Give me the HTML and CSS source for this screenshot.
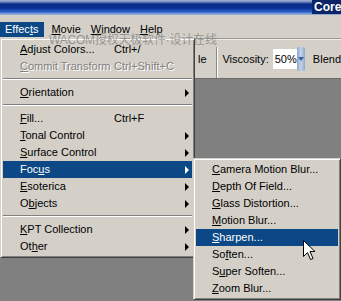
FILE: index.html
```html
<!DOCTYPE html>
<html lang="en">
<head>
    <meta charset="UTF-8">
    <title>Corel Painter - Effects</title>
    <link rel="stylesheet" href="styles.css">
</head>
<body>
    <div class="app">
        <div class="titlebar"><span class="title">Core</span></div>

        <div class="menubar">
            <div class="menu-title open">Effec<u>t</u>s</div>
            <div class="menu-title"><u>M</u>ovie</div>
            <div class="menu-title"><u>W</u>indow</div>
            <div class="menu-title"><u>H</u>elp</div>
        </div>

        <div class="toolbar">
            <span class="tool-label">le</span>
            <span class="tool-sep"></span>
            <span class="tool-label">Viscosity:</span>
            <span class="tool-input">50%</span>
            <span class="spinner"><span class="chevron"></span></span>
            <span class="tool-label blend">Blend</span>
        </div>

        <div class="workspace"></div>

        <div class="watermark">WACOM授权天极软件·设计在线</div>

        <div class="menu main-menu">
            <div class="item"><span class="label"><u>A</u>djust Colors...</span><span class="key">Ctrl+/</span></div>
            <div class="item disabled"><span class="label"><u>C</u>ommit Transform</span><span class="key">Ctrl+Shift+C</span></div>
            <div class="sep"></div>
            <div class="item sub"><span class="label"><u>O</u>rientation</span><span class="arrow"></span></div>
            <div class="sep"></div>
            <div class="item"><span class="label"><u>F</u>ill...</span><span class="key">Ctrl+F</span></div>
            <div class="item sub"><span class="label"><u>T</u>onal Control</span><span class="arrow"></span></div>
            <div class="item sub"><span class="label"><u>S</u>urface Control</span><span class="arrow"></span></div>
            <div class="item sub active"><span class="label">Foc<u>u</u>s</span><span class="arrow"></span></div>
            <div class="item sub"><span class="label"><u>E</u>soterica</span><span class="arrow"></span></div>
            <div class="item sub"><span class="label">O<u>b</u>jects</span><span class="arrow"></span></div>
            <div class="sep"></div>
            <div class="item sub"><span class="label"><u>K</u>PT Collection</span><span class="arrow"></span></div>
            <div class="item sub"><span class="label">Ot<u>h</u>er</span><span class="arrow"></span></div>
        </div>

        <div class="menu sub-menu">
            <div class="item"><span class="label"><u>C</u>amera Motion Blur...</span></div>
            <div class="item"><span class="label"><u>D</u>epth Of Field...</span></div>
            <div class="item"><span class="label"><u>G</u>lass Distortion...</span></div>
            <div class="item"><span class="label"><u>M</u>otion Blur...</span></div>
            <div class="item active"><span class="label"><u>S</u>harpen...</span></div>
            <div class="item"><span class="label">So<u>f</u>ten...</span></div>
            <div class="item"><span class="label">S<u>u</u>per Soften...</span></div>
            <div class="item"><span class="label"><u>Z</u>oom Blur...</span></div>
        </div>

        <svg class="cursor" width="13" height="21" viewBox="0 0 13 21">
            <path d="M0.5 0.5 L0.5 16.5 L4.5 12.5 L7.5 19.5 L10 18.5 L7 11.5 L12 11.5 Z" fill="#fff" stroke="#000" stroke-width="1"/>
        </svg>
    </div>
</body>
</html>
```

FILE: styles.css
```css
:root {
    --face: #d4d0c8;
    --shadow: #808080;
    --dark: #404040;
    --select: #0c4886;
}

body { margin: 0; background: #808080; font-family: 'Liberation Sans', Arial, sans-serif; font-size: 11px; color: #000; }
u { text-decoration: underline; text-underline-offset: 1px; }

.app { position: relative; width: 341px; height: 301px; overflow: hidden; background: #808080; }

.titlebar { height: 15px; background: linear-gradient(#a9b9d6 0, #6c86bb 2px, #0b2a86 4px, #0a2f92 8px, #2c64cc 12px, #8fa9d8 14px); display: flex; justify-content: flex-end; }
.title { color: #fff; font-weight: bold; font-size: 12px; line-height: 13px; padding: 1px 0 0 2px; background: #0b2466; height: 13px; width: 27px; }

.menubar { height: 23px; background: var(--face); display: flex; align-items: flex-end; box-sizing: border-box; padding-bottom: 1px; }
.menu-title { height: 15px; line-height: 15px; padding: 0 5px 0 5px; }
.menu-title.open { background: var(--select); color: #fff; padding-right: 6px; }
.menu-title.open + .menu-title { padding-left: 7px; }

.toolbar { height: 41px; background: var(--face); border-top: 1px solid #9a9890; border-bottom: 1px solid #6e6c68; box-sizing: border-box; display: flex; align-items: center; padding-left: 198px; box-shadow: inset 0 1px #eeece8; }
.tool-label { line-height: 14px; }
.tool-sep { width: 1px; height: 31px; margin: 8px 6px 0 9px; background: #8a8780; box-shadow: 1px 0 #fff; align-self: flex-start; }
.tool-input { background: #fff; width: 26px; height: 20px; line-height: 20px; margin-left: 4px; padding-left: 2px; box-sizing: border-box; }
.spinner { width: 9px; height: 24px; background: linear-gradient(90deg, #8ea7c8, #c5d5ec 50%, #8ea7c8); border-radius: 2px; display: flex; align-items: center; justify-content: center; }
.chevron { width: 0; height: 0; border-left: 3px solid transparent; border-right: 3px solid transparent; border-top: 4px solid #3c5f96; }
.blend { margin-left: 8px; }

.workspace { height: 222px; background: #808080; }

.watermark { position: absolute; left: 49px; top: 30px; font-family: 'Liberation Sans', 'Noto Sans CJK SC', sans-serif; font-size: 12px; color: rgba(120, 120, 120, 0.7); letter-spacing: -0.2px; pointer-events: none; z-index: 1; }

.menu { position: absolute; background: var(--face); border: 1px solid; border-color: var(--face) var(--dark) var(--dark) var(--face); box-shadow: inset 1px 1px #fff, inset -1px -1px var(--shadow); padding: 2px; box-sizing: border-box; }
.main-menu { left: 0; top: 38px; width: 195px; height: 220px; }
.sub-menu { left: 193px; top: 158px; width: 148px; height: 142px; }

.item { height: 17px; line-height: 17px; display: flex; align-items: center; white-space: nowrap; }
.main-menu .item { padding-left: 17px; }
.sub-menu .item { padding-left: 16px; }
.item .label { width: 94px; }
.item .key { flex: 1; }
.item.sub .label { flex: 1; }
.item.active { background: var(--select); color: #fff; }
.item.disabled { color: #808080; text-shadow: 1px 1px #fff; }

.arrow { width: 0; height: 0; border-top: 4px solid transparent; border-bottom: 4px solid transparent; border-left: 4px solid #000; margin-right: 3px; }
.item.active .arrow { border-left-color: #fff; }

.sep { height: 9px; position: relative; }
.sep::after { content: ''; position: absolute; left: 0; right: 0; top: 3px; border-top: 1px solid var(--shadow); border-bottom: 1px solid #fff; }

.cursor { position: absolute; left: 303px; top: 240px; }
```
